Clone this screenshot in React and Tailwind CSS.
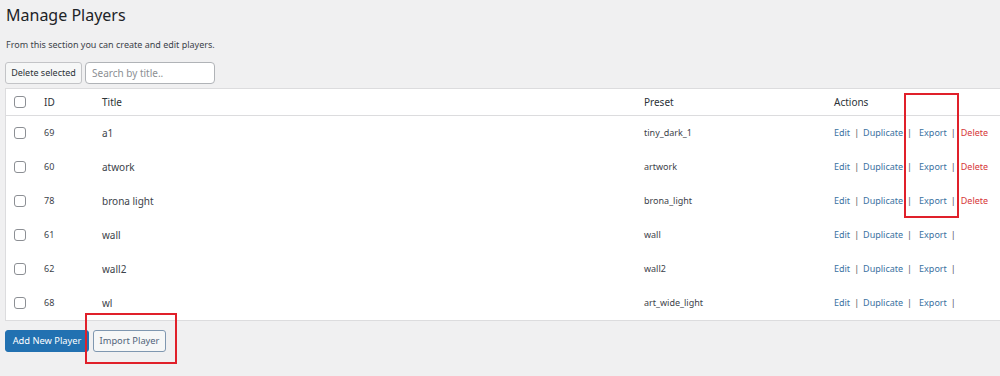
const players = [
  { id: 69, title: "a1", preset: "tiny_dark_1", canDelete: true },
  { id: 60, title: "atwork", preset: "artwork", canDelete: true },
  { id: 78, title: "brona light", preset: "brona_light", canDelete: true },
  { id: 61, title: "wall", preset: "wall", canDelete: false },
  { id: 62, title: "wall2", preset: "wall2", canDelete: false },
  { id: 68, title: "wl", preset: "art_wide_light", canDelete: false },
];

function Checkbox() {
  return <span className="block w-[12px] h-[12px] rounded-[3px] border border-[#8c8f94] bg-white" />;
}

function Sep() {
  return <span className="text-[#50575e] mx-[4px]">|</span>;
}

function Actions({ canDelete }) {
  return (
    <div className="flex items-center text-[9px] text-[#3b729f]">
      <span>Edit</span>
      <Sep />
      <span>Duplicate</span>
      <Sep />
      <span className="ml-[3px]">Export</span>
      <Sep />
      {canDelete && <span className="text-[#d63638] ml-[1px]">Delete</span>}
    </div>
  );
}

export default function App() {
  return (
    <div className="relative w-[1000px] h-[376px] overflow-hidden bg-[#f0f0f1] text-[#3c434a] font-['Noto_Sans',sans-serif]">
      <div className="pl-[5px]">
        <h1 className="pt-[4px] pl-[1px] h-[30px] text-[16px] leading-[22px] text-[#1d2327]">Manage Players</h1>
        <p className="mt-[8px] pl-[1px] text-[9px] leading-[14px] text-[#3c434a]">
          From this section you can create and edit players.
        </p>

        <div className="mt-[10px] flex gap-[3px] h-[22px]">
          <button className="w-[77px] h-[22px] text-[9px] text-[#2c3338] bg-[#f6f7f7] border border-[#c3c4c7] rounded-[3px]">
            Delete selected
          </button>
          <input
            className="w-[130px] h-[22px] px-[6px] text-[10px] bg-white border border-[#b0b3b7] rounded-[4px] placeholder:text-[#8c8f94] outline-none"
            placeholder="Search by title.."
          />
        </div>

        <div className="mt-[4px] bg-white border-t border-l border-b border-[#dcdcde]">
          <div className="grid grid-cols-[30px_58px_542px_190px_1fr] items-center h-[27px] pl-[8px] border-b border-[#dcdcde] text-[10px] text-[#2c3338]">
            <Checkbox />
            <span>ID</span>
            <span>Title</span>
            <span>Preset</span>
            <span>Actions</span>
          </div>
          {players.map((p) => (
            <div key={p.id} className="grid grid-cols-[30px_58px_542px_190px_1fr] items-center h-[34px] pl-[8px]">
              <Checkbox />
              <span className="text-[9px]">{p.id}</span>
              <span className="text-[10px]">{p.title}</span>
              <span className="text-[9px]">{p.preset}</span>
              <Actions canDelete={p.canDelete} />
            </div>
          ))}
        </div>

        <div className="mt-[9px] flex gap-[4px]">
          <button className="w-[84px] h-[22px] text-[9.3px] text-white bg-[#2271b1] border border-[#2271b1] rounded-[3px]">
            Add New Player
          </button>
          <button className="w-[73px] h-[22px] text-[9.3px] text-[#50637a] bg-[#f6f7f7] border border-[#7f97b0] rounded-[3px]">
            Import Player
          </button>
        </div>
      </div>

      <div className="absolute left-[904px] top-[93px] w-[55px] h-[125px] border-2 border-[#e0202a]" />
      <div className="absolute left-[85px] top-[313px] w-[92px] h-[51px] border-2 border-[#e0202a]" />
    </div>
  );
}
